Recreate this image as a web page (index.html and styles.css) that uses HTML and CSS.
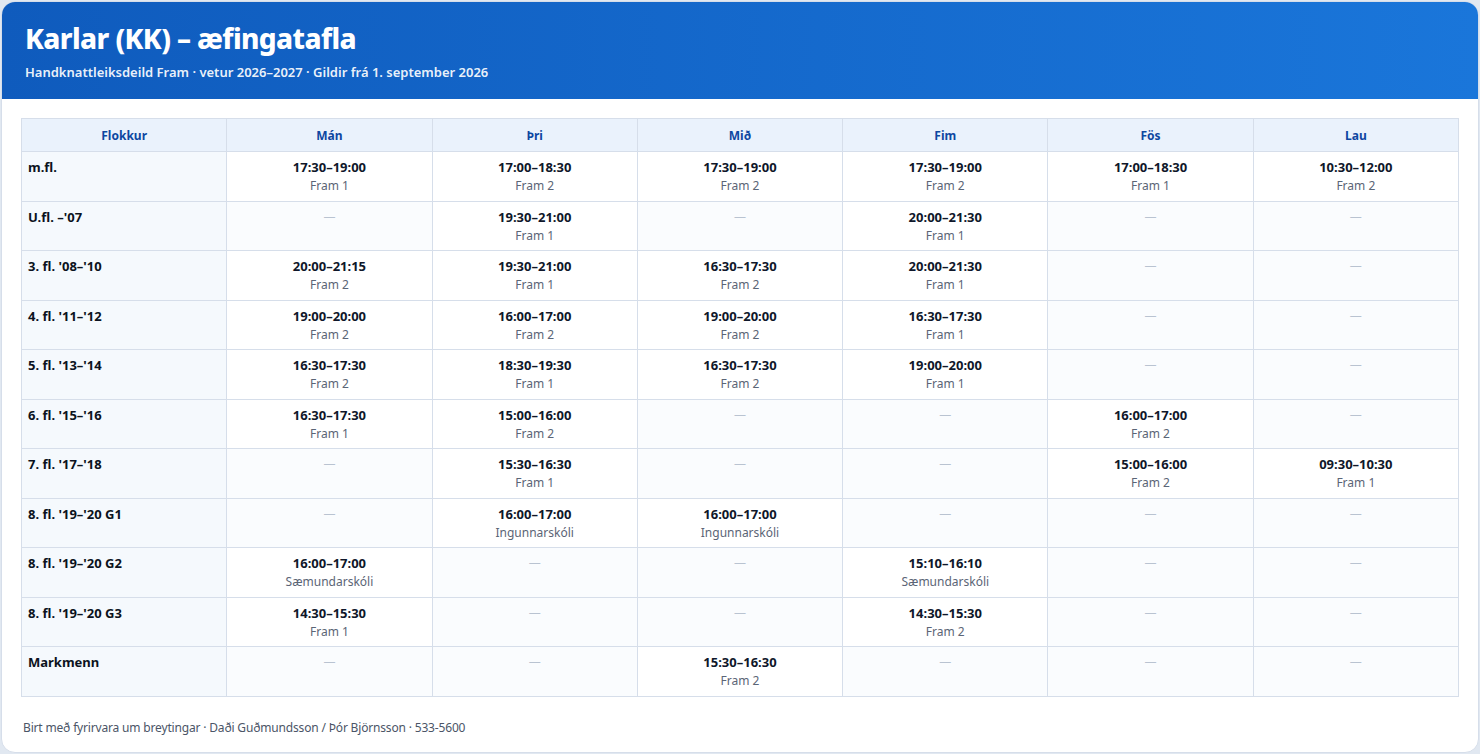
FILE: index.html
```html
<!DOCTYPE html>
<html lang="is">
<head>
<meta charset="utf-8">
<title>Karlar (KK) – æfingatafla</title>
<link rel="stylesheet" href="styles.css">
</head>
<body>
<div class="card">
  <header class="hero">
    <h1 class="title">Karlar (KK) – æfingatafla</h1>
    <p class="subtitle">Handknattleiksdeild Fram · vetur 2026–2027 · Gildir frá 1. september 2026</p>
  </header>
  <main class="content">
    <table class="schedule">
      <thead>
        <tr><th>Flokkur</th><th>Mán</th><th>Þri</th><th>Mið</th><th>Fim</th><th>Fös</th><th>Lau</th></tr>
      </thead>
      <tbody>
        <tr><td class="grp">m.fl.</td>
          <td><div class="time">17:30–19:00</div><div class="loc">Fram 1</div></td>
          <td><div class="time">17:00–18:30</div><div class="loc">Fram 2</div></td>
          <td><div class="time">17:30–19:00</div><div class="loc">Fram 2</div></td>
          <td><div class="time">17:30–19:00</div><div class="loc">Fram 2</div></td>
          <td><div class="time">17:00–18:30</div><div class="loc">Fram 1</div></td>
          <td><div class="time">10:30–12:00</div><div class="loc">Fram 2</div></td></tr>
        <tr><td class="grp">U.fl. –'07</td>
          <td class="empty"><span class="dash">—</span></td>
          <td><div class="time">19:30–21:00</div><div class="loc">Fram 1</div></td>
          <td class="empty"><span class="dash">—</span></td>
          <td><div class="time">20:00–21:30</div><div class="loc">Fram 1</div></td>
          <td class="empty"><span class="dash">—</span></td>
          <td class="empty"><span class="dash">—</span></td></tr>
        <tr><td class="grp">3. fl. '08–'10</td>
          <td><div class="time">20:00–21:15</div><div class="loc">Fram 2</div></td>
          <td><div class="time">19:30–21:00</div><div class="loc">Fram 1</div></td>
          <td><div class="time">16:30–17:30</div><div class="loc">Fram 2</div></td>
          <td><div class="time">20:00–21:30</div><div class="loc">Fram 1</div></td>
          <td class="empty"><span class="dash">—</span></td>
          <td class="empty"><span class="dash">—</span></td></tr>
        <tr><td class="grp">4. fl. '11–'12</td>
          <td><div class="time">19:00–20:00</div><div class="loc">Fram 2</div></td>
          <td><div class="time">16:00–17:00</div><div class="loc">Fram 2</div></td>
          <td><div class="time">19:00–20:00</div><div class="loc">Fram 2</div></td>
          <td><div class="time">16:30–17:30</div><div class="loc">Fram 1</div></td>
          <td class="empty"><span class="dash">—</span></td>
          <td class="empty"><span class="dash">—</span></td></tr>
        <tr><td class="grp">5. fl. '13–'14</td>
          <td><div class="time">16:30–17:30</div><div class="loc">Fram 2</div></td>
          <td><div class="time">18:30–19:30</div><div class="loc">Fram 1</div></td>
          <td><div class="time">16:30–17:30</div><div class="loc">Fram 2</div></td>
          <td><div class="time">19:00–20:00</div><div class="loc">Fram 1</div></td>
          <td class="empty"><span class="dash">—</span></td>
          <td class="empty"><span class="dash">—</span></td></tr>
        <tr><td class="grp">6. fl. '15–'16</td>
          <td><div class="time">16:30–17:30</div><div class="loc">Fram 1</div></td>
          <td><div class="time">15:00–16:00</div><div class="loc">Fram 2</div></td>
          <td class="empty"><span class="dash">—</span></td>
          <td class="empty"><span class="dash">—</span></td>
          <td><div class="time">16:00–17:00</div><div class="loc">Fram 2</div></td>
          <td class="empty"><span class="dash">—</span></td></tr>
        <tr><td class="grp">7. fl. '17–'18</td>
          <td class="empty"><span class="dash">—</span></td>
          <td><div class="time">15:30–16:30</div><div class="loc">Fram 1</div></td>
          <td class="empty"><span class="dash">—</span></td>
          <td class="empty"><span class="dash">—</span></td>
          <td><div class="time">15:00–16:00</div><div class="loc">Fram 2</div></td>
          <td><div class="time">09:30–10:30</div><div class="loc">Fram 1</div></td></tr>
        <tr><td class="grp">8. fl. '19–'20 G1</td>
          <td class="empty"><span class="dash">—</span></td>
          <td><div class="time">16:00–17:00</div><div class="loc">Ingunnarskóli</div></td>
          <td><div class="time">16:00–17:00</div><div class="loc">Ingunnarskóli</div></td>
          <td class="empty"><span class="dash">—</span></td>
          <td class="empty"><span class="dash">—</span></td>
          <td class="empty"><span class="dash">—</span></td></tr>
        <tr><td class="grp">8. fl. '19–'20 G2</td>
          <td><div class="time">16:00–17:00</div><div class="loc">Sæmundarskóli</div></td>
          <td class="empty"><span class="dash">—</span></td>
          <td class="empty"><span class="dash">—</span></td>
          <td><div class="time">15:10–16:10</div><div class="loc">Sæmundarskóli</div></td>
          <td class="empty"><span class="dash">—</span></td>
          <td class="empty"><span class="dash">—</span></td></tr>
        <tr><td class="grp">8. fl. '19–'20 G3</td>
          <td><div class="time">14:30–15:30</div><div class="loc">Fram 1</div></td>
          <td class="empty"><span class="dash">—</span></td>
          <td class="empty"><span class="dash">—</span></td>
          <td><div class="time">14:30–15:30</div><div class="loc">Fram 2</div></td>
          <td class="empty"><span class="dash">—</span></td>
          <td class="empty"><span class="dash">—</span></td></tr>
        <tr><td class="grp">Markmenn</td>
          <td class="empty"><span class="dash">—</span></td>
          <td class="empty"><span class="dash">—</span></td>
          <td><div class="time">15:30–16:30</div><div class="loc">Fram 2</div></td>
          <td class="empty"><span class="dash">—</span></td>
          <td class="empty"><span class="dash">—</span></td>
          <td class="empty"><span class="dash">—</span></td></tr>
      </tbody>
    </table>
    <p class="footnote">Birt með fyrirvara um breytingar · Daði Guðmundsson / Þór Björnsson · 533-5600</p>
  </main>
</div>
</body>
</html>
```
FILE: styles.css
```css
html, body {
  margin: 0;
  padding: 0;
}
body {
  background: #e1e8f1;
  font-family: "Noto Sans", "Open Sans", sans-serif;
  color: #0f172a;
}
.card {
  margin: 1px;
  background: #ffffff;
  border: 1px solid #d6deea;
  border-radius: 14px;
  overflow: hidden;
}
.hero {
  background: linear-gradient(90deg, #0f5bbd 0%, #1a76da 100%);
  color: #ffffff;
  padding: 19px 23px 18px;
}
.title {
  margin: 0;
  font-size: 28px;
  line-height: 34px;
  font-weight: 800;
  letter-spacing: -0.6px;
}
.subtitle {
  margin: 8px 0 0;
  font-size: 13px;
  line-height: 18px;
  font-weight: 600;
  color: rgba(255, 255, 255, 0.93);
}
.content {
  padding: 19px 19px 15px;
}
.schedule {
  width: 100%;
  border-collapse: collapse;
  table-layout: fixed;
}
.schedule th,
.schedule td {
  border: 1px solid #d6deea;
}
.schedule th {
  background: #eaf2fc;
  color: #0d47a1;
  font-size: 12px;
  line-height: 16px;
  font-weight: 700;
  padding: 9px 8px 7px;
  text-align: center;
}
.schedule td {
  padding: 6px 8px 6.5px;
  vertical-align: top;
  text-align: center;
  height: 36px;
}
.schedule td.grp {
  text-align: left;
  padding-left: 6px;
  background: #f5f9fd;
  font-size: 13px;
  line-height: 18px;
  font-weight: 700;
  color: #0b1220;
}
.schedule td.empty {
  background: #fafcfe;
}
.time {
  font-size: 13px;
  line-height: 18px;
  font-weight: 700;
  color: #0f172a;
}
.loc {
  margin-top: 2px;
  font-size: 12px;
  line-height: 16px;
  color: #5b6576;
}
.dash {
  display: block;
  font-size: 12px;
  line-height: 18px;
  color: #b9c3d1;
}
.footnote {
  margin: 22px 0 0;
  padding-left: 2px;
  font-size: 12px;
  line-height: 18px;
  letter-spacing: -0.17px;
  color: #4b5567;
}
```
